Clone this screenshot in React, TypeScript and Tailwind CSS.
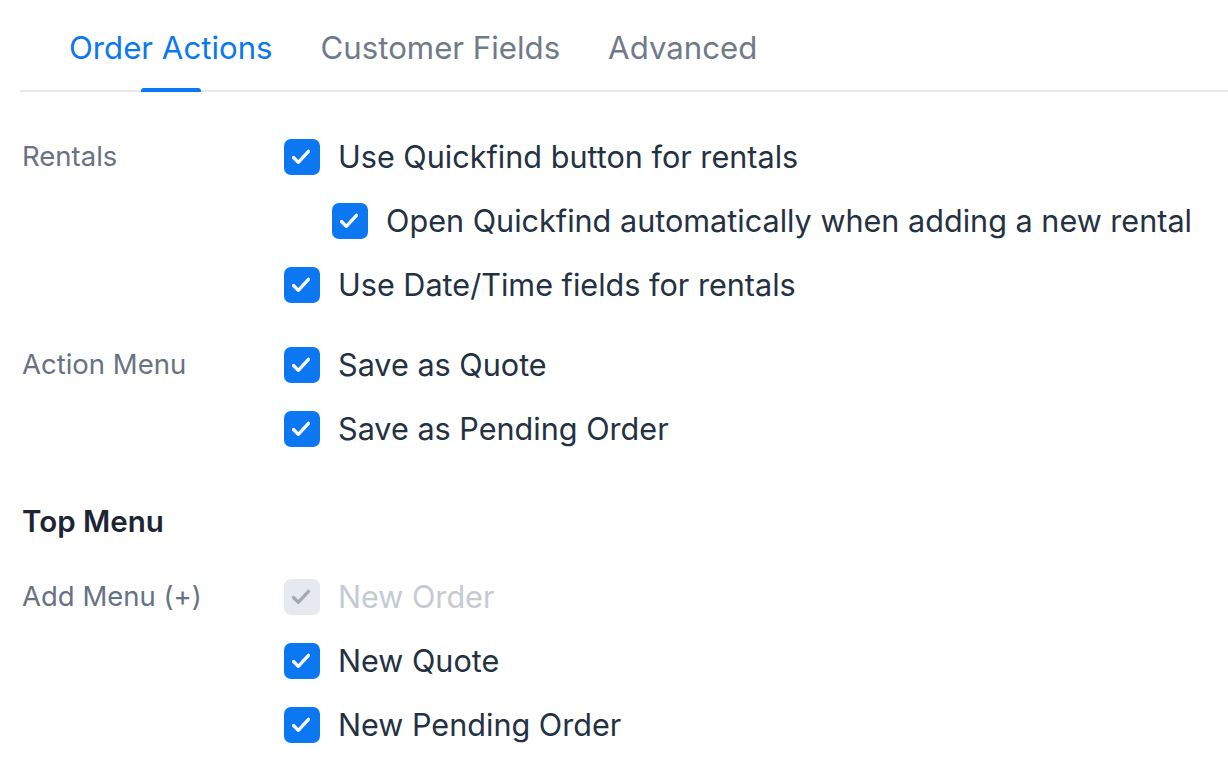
import React, { useState } from 'react';

const font = { fontFamily: 'Inter, "Noto Sans", sans-serif' };

type Item = { id: string; label: string; checked: boolean; disabled?: boolean; indent?: boolean };

const tabs = ['Order Actions', 'Customer Fields', 'Advanced'];

const CheckIcon: React.FC<{ className?: string }> = ({ className }) => (
  <svg viewBox="0 0 36 36" className={className} fill="none">
    <path d="M9.5 18.5l4.8 4.8 10.2-11" stroke="currentColor" strokeWidth="3.2" strokeLinecap="round" strokeLinejoin="round" />
  </svg>
);

const CheckRow: React.FC<{ item: Item; onToggle: (id: string) => void }> = ({ item, onToggle }) => (
  <label className={`flex h-16 items-center ${item.indent ? 'pl-12' : ''}`}>
    <button
      type="button"
      disabled={item.disabled}
      onClick={() => onToggle(item.id)}
      className={`flex h-9 w-9 shrink-0 items-center justify-center rounded-[7px] ${
        item.disabled ? 'bg-[#e6e9ee] text-[#a2a9b3]' : item.checked ? 'bg-[#0b78f2] text-white' : 'border-2 border-[#c7cdd4] bg-white text-transparent'
      }`}
    >
      <CheckIcon className="h-9 w-9" />
    </button>
    <span className={`ml-[18px] text-[30.6px] leading-9 ${item.disabled ? 'text-[#c5cbd3]' : 'text-[#243142]'}`}>{item.label}</span>
  </label>
);

const Section: React.FC<{ label: string; items: Item[]; onToggle: (id: string) => void; className?: string }> = ({
  label,
  items,
  onToggle,
  className,
}) => (
  <div className={`flex ${className || ''}`}>
    <div className="flex h-16 w-[264px] shrink-0 items-center pl-[2px] text-[27.5px] text-[#687282]">{label}</div>
    <div className="flex flex-col">
      {items.map((item) => (
        <CheckRow key={item.id} item={item} onToggle={onToggle} />
      ))}
    </div>
  </div>
);

export default function App() {
  const [active, setActive] = useState(0);
  const [items, setItems] = useState<Record<string, Item[]>>({
    rentals: [
      { id: 'qf', label: 'Use Quickfind button for rentals', checked: true },
      { id: 'qfauto', label: 'Open Quickfind automatically when adding a new rental', checked: true, indent: true },
      { id: 'dt', label: 'Use Date/Time fields for rentals', checked: true },
    ],
    action: [
      { id: 'quote', label: 'Save as Quote', checked: true },
      { id: 'pending', label: 'Save as Pending Order', checked: true },
    ],
    add: [
      { id: 'neworder', label: 'New Order', checked: true, disabled: true },
      { id: 'newquote', label: 'New Quote', checked: true },
      { id: 'newpending', label: 'New Pending Order', checked: true },
    ],
  });

  const toggle = (id: string) => {
    setItems((prev) => {
      const next: Record<string, Item[]> = {};
      Object.keys(prev).forEach((k) => {
        next[k] = prev[k].map((i) => (i.id === id && !i.disabled ? { ...i, checked: !i.checked } : i));
      });
      return next;
    });
  };

  return (
    <div className="min-h-screen bg-white pl-5" style={font}>
      <div className="flex h-[92px] border-b-2 border-[#e8eaee] pl-[25px]">
        {tabs.map((t, idx) => (
          <button
            key={t}
            onClick={() => setActive(idx)}
            className={`relative flex h-full items-start px-6 pt-[30px] text-[31.2px] leading-9 ${idx === active ? 'text-[#0b78f2]' : 'text-[#707a89]'}`}
          >
            {t}
            {idx === active && (
              <span className="absolute -bottom-[2px] left-1/2 h-1 w-[60px] -translate-x-1/2 rounded-t-[3px] bg-[#0b78f2]" />
            )}
          </button>
        ))}
      </div>

      <Section label="Rentals" items={items.rentals} onToggle={toggle} className="mt-[33px]" />
      <Section label="Action Menu" items={items.action} onToggle={toggle} className="mt-4" />

      <h3 className="mt-10 flex h-10 items-center pl-[2px] text-[29.5px] font-semibold text-[#1c2533]">Top Menu</h3>

      <Section label="Add Menu (+)" items={items.add} onToggle={toggle} className="mt-6" />
    </div>
  );
}
